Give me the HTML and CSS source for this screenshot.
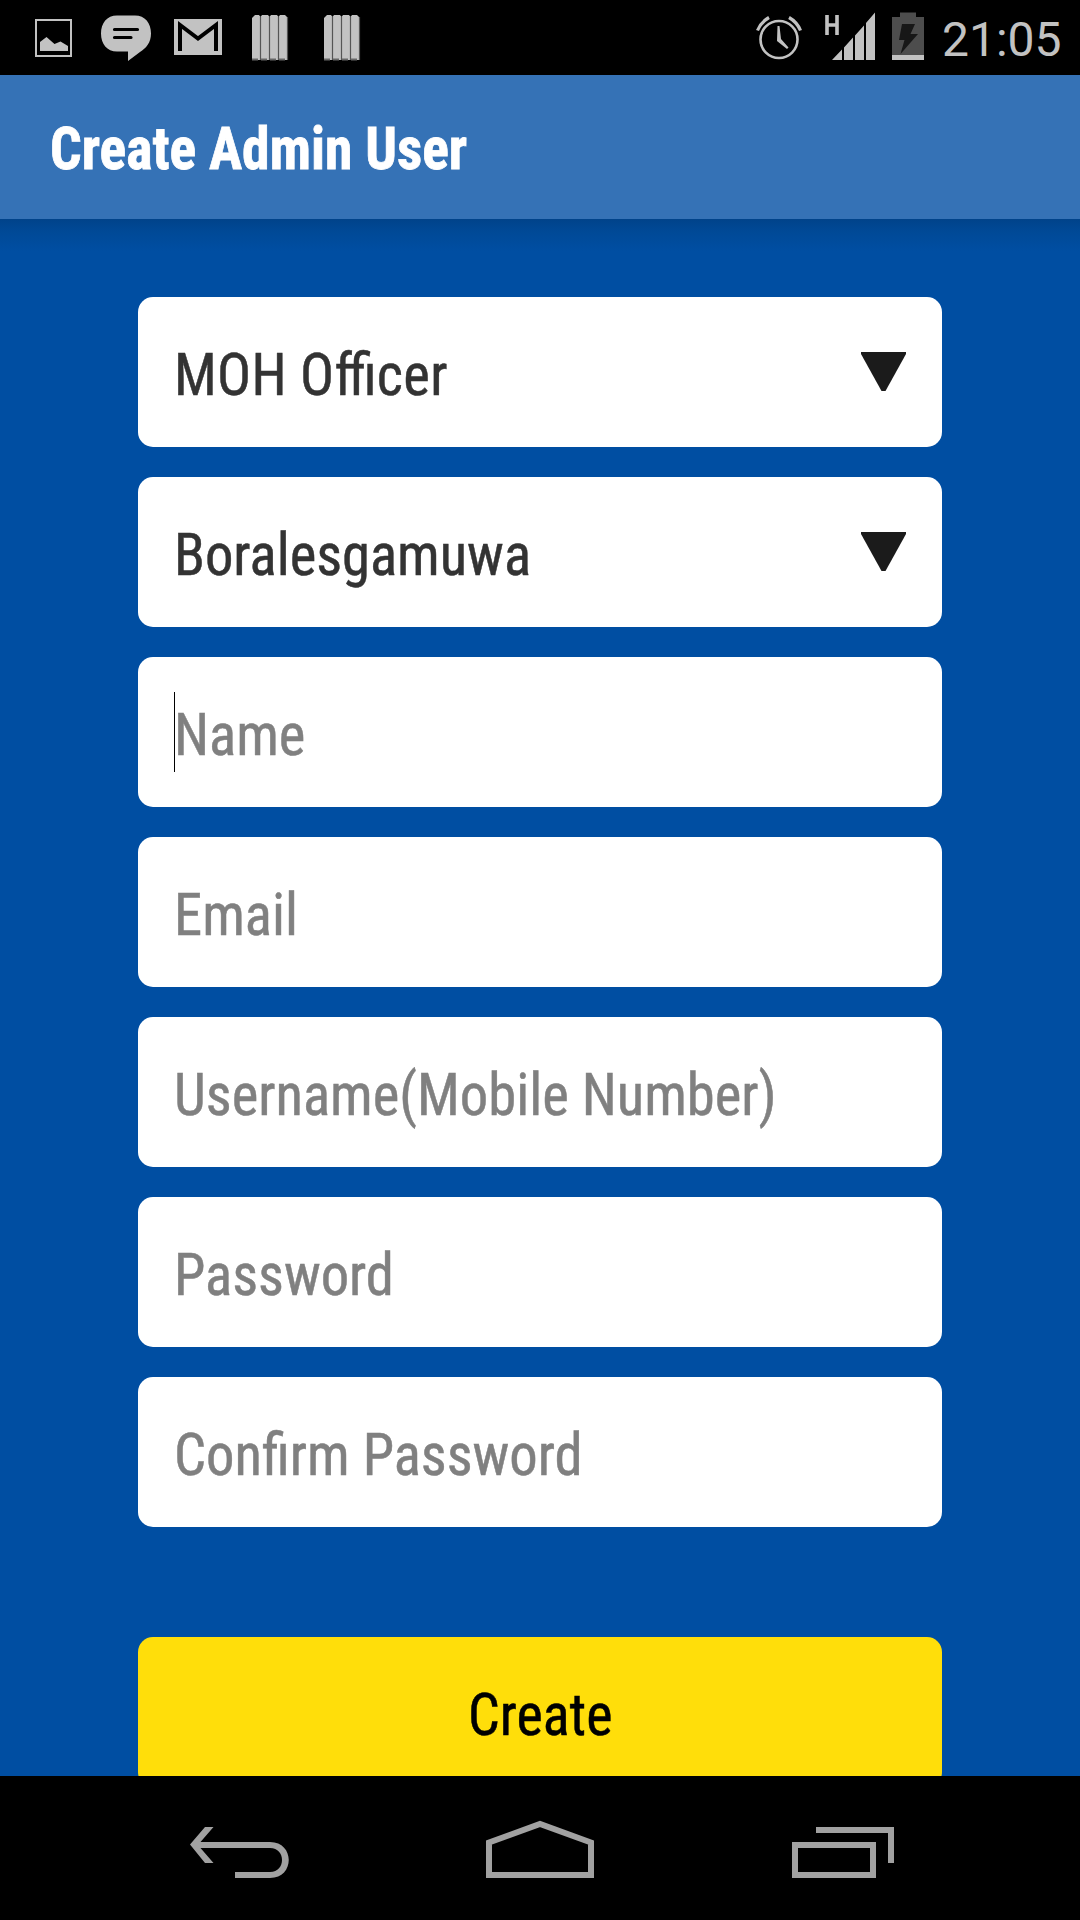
FILE: index.html
```
<!DOCTYPE html>
<html lang="en">
<head>
    <meta charset="UTF-8">
    <meta name="viewport" content="width=device-width, initial-scale=1.0">
    <title>Create Admin User</title>
    <link rel="stylesheet" href="styles.css">
</head>
<body>
    <div class="status-bar">
        <svg class="status-icons" width="380" height="75" viewBox="0 0 380 75">
            <!-- Picture -->
            <rect x="36" y="20" width="35" height="36" fill="none" stroke="#c2c2c2" stroke-width="2"/>
            <path d="M40 51V42L46.500 37L54.500 44L60.500 41.500L68 46V51Z" fill="#c2c2c2"/>
            <!-- Message -->
            <path d="M117 15.500H135C145 15.500 151 23 151 33.500C151 43 146 48 140 52L128 61V51.500H117C107 51.500 101 44 101 33.500C101 23 107 15.500 117 15.500Z" fill="#c2c2c2"/>
            <path d="M114.500 29.500H137.500M114.500 37.500H131" stroke="#000" stroke-width="3.200" stroke-linecap="round"/>
            <!-- Mail -->
            <rect x="174" y="19" width="48" height="36" fill="#c2c2c2"/>
            <path d="M180 51V25L198 38.500L216 25V51" fill="none" stroke="#000" stroke-width="4"/>
            <!-- Stripes -->
            <g id="stripes">
                <path d="M252 18L255 15H285L288 18V60H252Z" fill="#c2c2c2"/>
                <path d="M260.500 17V60M269.500 17V60M278.500 17V60M287.500 17V60" stroke="#555" stroke-width="1.200"/>
                <path d="M252 59.500H258M261 59.500H267M270 59.500H276M279 59.500H285" stroke="#666" stroke-width="2"/>
                <path d="M259 15L260.500 17L262 15ZM268 15L269.500 17L271 15ZM277 15L278.500 17L280 15Z" fill="#000"/>
            </g>
            <use href="#stripes" x="72"/>
        </svg>
        <div class="status-right">
            <svg width="192" height="75" viewBox="750 0 192 75">
                <!-- Alarm -->
                <circle cx="779" cy="39.500" r="18.500" fill="none" stroke="#c2c2c2" stroke-width="2.600"/>
                <path d="M757.500 30.500Q761 22 769 17.500M800.500 30.500Q797 22 789 17.500" fill="none" stroke="#c2c2c2" stroke-width="3.200"/>
                <path d="M777.500 26H779.500L781 39L788.500 47.500L787 49L777 41Z" fill="#c2c2c2"/>
                <!-- Signal -->
                <path d="M827 15V35M837 15V35M827 25H837" fill="none" stroke="#c2c2c2" stroke-width="3.600"/>
                <path d="M832 60L842 49.500V60ZM844 60V47.500L853 37.500V60ZM855 60V35.500L864 25.500V60ZM866 60V23L875 12.500V60Z" fill="#c2c2c2"/>
                <!-- Battery -->
                <path d="M892 60V17H900V12.500H916V17H924V60Z" fill="#4d4d4d"/>
                <rect x="892" y="55" width="32" height="5" fill="#c2c2c2"/>
                <path d="M902 24H915L910.500 34H918L900.500 54L904.500 40H899Z" fill="#171717"/>
            </svg>
            <span class="clock">21:05</span>
        </div>
    </div>

    <header class="title-bar">
        <h1 class="title">Create Admin User</h1>
    </header>

    <main class="content">
        <div class="form">
            <div class="field select">
                <span class="label officer">MOH Officer</span>
                <svg width="45" height="40" viewBox="0 0 45 40"><path d="M0 0H45V2L24.500 39H20.500L0 2Z"/></svg>
            </div>
            <div class="field select">
                <span class="label">Boralesgamuwa</span>
                <svg width="45" height="40" viewBox="0 0 45 40"><path d="M0 0H45V2L24.500 39H20.500L0 2Z"/></svg>
            </div>
            <div class="field hint focused"><span class="label">Name</span></div>
            <div class="field hint"><span class="label">Email</span></div>
            <div class="field hint"><span class="label">Username(Mobile Number)</span></div>
            <div class="field hint"><span class="label">Password</span></div>
            <div class="field hint"><span class="label">Confirm Password</span></div>
            <div class="field create-button"><span class="label">Create</span></div>
        </div>
    </main>

    <nav class="nav-bar">
        <svg width="100" height="60" viewBox="190 1820 100 60">
            <path d="M213.500 1827H205L190 1844.500L205 1863H213.500L200.500 1848H270C286 1848 286 1872 270 1872H235V1878H270C295 1878 295 1842 270 1842H200.500Z" fill="#a1a1a1"/>
        </svg>
        <svg width="106" height="60" viewBox="488 1820 106 60">
            <path d="M489 1842.500L540 1824L591 1842.500V1875H489Z" fill="none" stroke="#a1a1a1" stroke-width="6"/>
        </svg>
        <svg width="102" height="60" viewBox="792 1820 102 60">
            <path d="M795 1845H873V1875H795ZM816 1830H891V1863" fill="none" stroke="#a1a1a1" stroke-width="6"/>
        </svg>
    </nav>
</body>
</html>
```
FILE: styles.css
```
body {
    margin: 0;
    height: 1920px;
    display: flex;
    flex-direction: column;
    font-family: "Roboto Condensed", Roboto, sans-serif;
    font-stretch: 75%;
    background: #000;
    overflow: hidden;
}

/* Status bar */
.status-bar {
    height: 75px;
    display: flex;
    justify-content: space-between;
    color: #c2c2c2;
}

.status-right {
    display: flex;
    padding-right: 19px;
}

.clock {
    width: 119px;
    font-family: Roboto, sans-serif;
    font-stretch: 100%;
    font-size: 48px;
    line-height: 79px;
}

/* Title */
.title-bar {
    height: 144px;
    padding-left: 50px;
    background: #3572b6;
}

.title {
    margin: 0;
    font-size: 60px;
    font-weight: bold;
    line-height: 148px;
    color: #fff;
    -webkit-text-stroke: 0.8px #fff;
    transform: scaleX(0.927);
    transform-origin: left;
}

/* Form */
.content {
    height: 1557px;
    background: linear-gradient(#00438a, #004996 12px, #004ea2 32px);
    overflow: hidden;
}

.form {
    width: 804px;
    margin: 0 auto;
    padding-top: 78px;
    display: flex;
    flex-direction: column;
    gap: 30px;
}

.field {
    height: 150px;
    padding: 5px 36px 0;
    box-sizing: border-box;
    display: flex;
    align-items: center;
    justify-content: space-between;
    flex-shrink: 0;
    border-radius: 15px;
    background: #fff;
    font-size: 60px;
    line-height: 80px;
    color: #333;
}

.label {
    -webkit-text-stroke: 0.5px;
    transform: scaleX(0.944);
    transform-origin: left;
}

.officer {
    letter-spacing: 0.3px;
    font-feature-settings: "liga" 1;
}

.select svg {
    margin-bottom: 5px;
    fill: #1b1b1b;
}

.hint {
    color: #808080;
}

.focused {
    position: relative;
}

.focused::before {
    content: "";
    position: absolute;
    left: 36px;
    top: 35px;
    width: 1px;
    height: 80px;
    background: #000;
}

.create-button {
    margin-top: 80px;
    justify-content: center;
    background: #ffde0a;
    color: #000;
}

.create-button .label {
    transform: scaleX(0.935);
    transform-origin: center;
}

/* Navigation bar */
.nav-bar {
    height: 144px;
    padding: 4px 186px 0 190px;
    box-sizing: border-box;
    display: flex;
    align-items: center;
    justify-content: space-between;
}

.nav-bar svg {
    overflow: visible;
}
```
